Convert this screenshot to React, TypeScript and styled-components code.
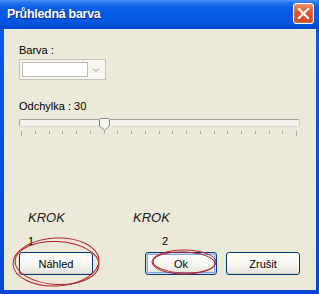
import React from "react";
import styled, { createGlobalStyle } from "styled-components";

const GlobalStyle = createGlobalStyle`
  html, body {
    margin: 0;
    padding: 0;
    background: #fff;
  }
  * {
    box-sizing: border-box;
  }
`;

const Window = styled.div`
  position: relative;
  display: flex;
  flex-direction: column;
  width: 319px;
  height: 294px;
  background: linear-gradient(180deg, #0a5ae6 0%, #0447d4 100%);
  padding: 0 3px 4px 4px;
  font-family: "Liberation Sans", Arial, sans-serif;
  overflow: hidden;
`;

const TitleBar = styled.div`
  display: flex;
  align-items: center;
  justify-content: space-between;
  height: 29px;
  margin: 0 -3px 0 -4px;
  padding: 0 5px 2px 7px;
  background: linear-gradient(
    180deg,
    #4a93f6 0%,
    #2274f0 10%,
    #0a5fe8 25%,
    #0358e4 60%,
    #0452dc 85%,
    #0346d0 100%
  );
`;

const Title = styled.span`
  color: #fff;
  font-weight: 700;
  font-size: 12.5px;
  letter-spacing: -0.3px;
  text-shadow: 1px 1px 0 #0b2a8c;
`;

const CloseButton = styled.div`
  display: flex;
  align-items: center;
  justify-content: center;
  width: 21px;
  height: 21px;
  border: 1px solid #fff;
  border-radius: 3px;
  background: linear-gradient(180deg, #ec8b64 0%, #dc5630 45%, #cf4a22 100%);
  box-shadow: inset 0 0 0 1px rgba(255, 255, 255, 0.15);
`;

const Body = styled.div`
  flex: 1;
  display: flex;
  flex-direction: column;
  background: #ece9d8;
  padding: 15px 16px 15px 15px;
  color: #000;
`;

const Label = styled.div<{ $top?: number }>`
  font-size: 11px;
  font-weight: 400;
  line-height: 13px;
  margin-top: ${(p) => p.$top ?? 0}px;
`;

const Combo = styled.div`
  display: flex;
  width: 87px;
  height: 21px;
  margin-top: 2px;
  border: 1px solid #c3c2b8;
  background: #f6f5ee;
  padding: 2px 1px 2px 2px;
`;

const ColorField = styled.div`
  flex: 1;
  background: #fff;
  border: 1px solid #bdbcb3;
`;

const DropButton = styled.div`
  display: flex;
  align-items: center;
  justify-content: center;
  width: 16px;
`;

const Slider = styled.div`
  position: relative;
  height: 20px;
  margin-top: 5px;
`;

const Track = styled.div`
  margin-top: 1px;
  height: 8px;
  border: 1px solid #a4a39c;
  border-bottom-color: #dedcd2;
  border-right-color: #cfcdc4;
  border-radius: 2px;
  background: #f3f2ed;
`;

const Thumb = styled.svg`
  position: absolute;
  top: 0;
`;

const Ticks = styled.div`
  display: flex;
  justify-content: space-between;
  align-items: flex-start;
  margin: 4px 3px 0 2px;
`;

const Tick = styled.div<{ $long?: boolean }>`
  width: 1px;
  height: ${(p) => (p.$long ? 5 : 3)}px;
  background: #a9a89f;
`;

const Steps = styled.div`
  display: flex;
  margin-top: auto;
  padding-left: 9px;
`;

const Step = styled.div`
  display: flex;
  flex-direction: column;
  width: 105px;
`;

const StepTitle = styled.div`
  font-size: 13px;
  line-height: 15px;
  font-style: italic;
  color: #1a1a1a;
`;

const StepNumber = styled.div<{ $indent: number }>`
  font-size: 11px;
  line-height: 13px;
  margin-top: 10px;
  padding-left: ${(p) => p.$indent}px;
`;

const Buttons = styled.div`
  display: flex;
  gap: 9px;
  margin-top: 4px;
`;

const Button = styled.div<{ $width: number; $default?: boolean; $push?: boolean }>`
  display: flex;
  align-items: center;
  justify-content: center;
  width: ${(p) => p.$width}px;
  height: 23px;
  margin-right: ${(p) => (p.$push ? "auto" : "0")};
  border: 1px solid #003c74;
  border-radius: 3px;
  background: linear-gradient(180deg, #ffffff 0%, #f6f5f1 60%, #e3e1d8 100%);
  box-shadow: ${(p) =>
    p.$default
      ? "inset 0 0 0 1px #c9daf8, inset 0 0 0 2px #7fa0ee"
      : "inset 0 -1px 0 #d6d3c6"};
  font-size: 11px;
  font-weight: 400;
  color: #000;
`;

const Annotations = styled.svg`
  position: absolute;
  left: 0;
  top: 0;
  pointer-events: none;
`;

const TICK_COUNT = 21;
const VALUE = 30;
const TICK_START = 2;
const TICK_SPAN = 276;

export default function App() {
  const thumbLeft = TICK_START + (VALUE / 100) * TICK_SPAN - 5;

  return (
    <>
      <GlobalStyle />
      <Window>
        <TitleBar>
          <Title>Průhledná barva</Title>
          <CloseButton>
            <svg width="13" height="13" viewBox="0 0 13 13">
              <path
                d="M2 2 L11 11 M11 2 L2 11"
                stroke="#fff"
                strokeWidth="2.2"
                strokeLinecap="square"
              />
            </svg>
          </CloseButton>
        </TitleBar>
        <Body>
          <Label>Barva :</Label>
          <Combo>
            <ColorField />
            <DropButton>
              <svg width="8" height="6" viewBox="0 0 8 6">
                <path d="M1 1.5 L4 4.5 L7 1.5" stroke="#c8c6bb" strokeWidth="1.6" fill="none" />
              </svg>
            </DropButton>
          </Combo>

          <Label $top={20}>Odchylka : 30</Label>
          <Slider>
            <Track />
            <Thumb width="11" height="13" viewBox="0 0 11 13" style={{ left: thumbLeft }}>
              <path
                d="M1.5 0.5 H9.5 Q10.5 0.5 10.5 1.5 V8 L5.5 12.5 L0.5 8 V1.5 Q0.5 0.5 1.5 0.5 Z"
                fill="#f7f7f2"
                stroke="#85847b"
              />
              <path d="M1.5 8.3 L5.5 11.6 L9.5 8.3" stroke="#b8d8b0" fill="none" />
            </Thumb>
            <Ticks>
              {Array.from({ length: TICK_COUNT }, (_, i) => (
                <Tick key={i} $long={i === 0 || i === TICK_COUNT - 1} />
              ))}
            </Ticks>
          </Slider>

          <Steps>
            <Step>
              <StepTitle>KROK</StepTitle>
              <StepNumber $indent={0}>1</StepNumber>
            </Step>
            <Step>
              <StepTitle>KROK</StepTitle>
              <StepNumber $indent={29}>2</StepNumber>
            </Step>
          </Steps>

          <Buttons>
            <Button $width={74} $push>
              Náhled
            </Button>
            <Button $width={72} $default>
              Ok
            </Button>
            <Button $width={74}>Zrušit</Button>
          </Buttons>
        </Body>

        <Annotations width="319" height="294" viewBox="0 0 319 294">
          <g fill="none" stroke="#b0202a" strokeWidth="1">
            <ellipse cx="56" cy="262" rx="43" ry="24" transform="rotate(-3 56 262)" />
            <ellipse cx="57" cy="263" rx="42" ry="21.5" transform="rotate(3 57 263)" />
            <ellipse cx="184" cy="262" rx="32" ry="12" />
            <ellipse cx="184" cy="262.5" rx="31" ry="10.5" transform="rotate(2 184 262)" />
          </g>
        </Annotations>
      </Window>
    </>
  );
}
